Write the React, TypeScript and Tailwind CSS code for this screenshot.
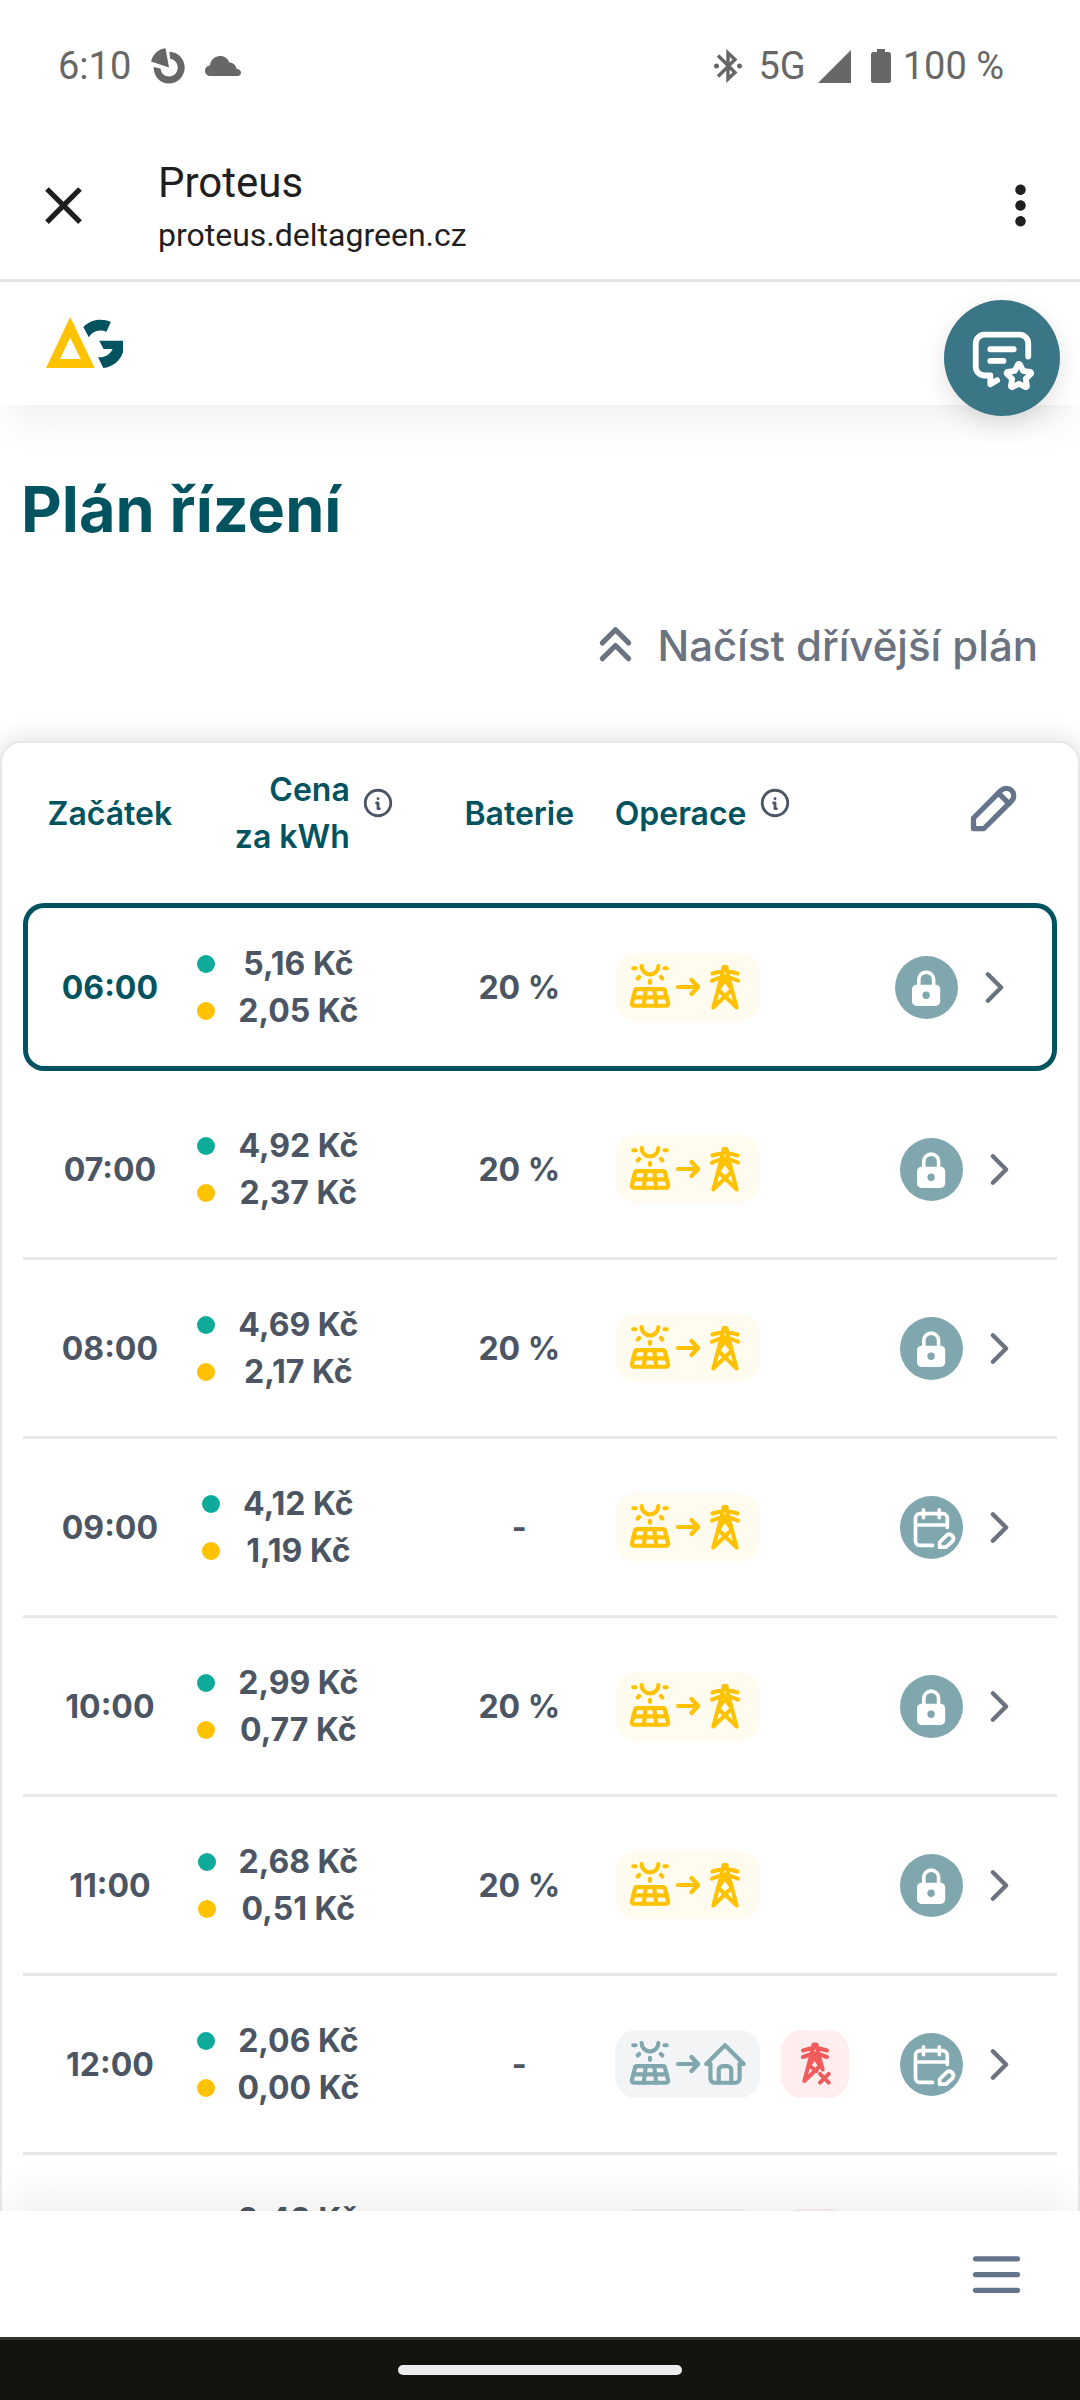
import { Fragment } from "react";
import clsx from "clsx";
import { MdClose, MdMoreVert } from "react-icons/md";
import {
  TbChevronRight,
  TbChevronsUp,
  TbHome,
  TbInfoCircle,
  TbMenu2,
  TbMessageStar,
  TbPencil,
  TbSolarPanel2,
} from "react-icons/tb";

type Slot = {
  time: string;
  buy: string;
  sell: string;
  battery: string;
  operation: "toGrid" | "toHome";
  gridBlocked?: boolean;
  source: "locked" | "planned";
  current?: boolean;
};

const slots: Slot[] = [
  { time: "06:00", buy: "5,16 Kč", sell: "2,05 Kč", battery: "20 %", operation: "toGrid", source: "locked", current: true },
  { time: "07:00", buy: "4,92 Kč", sell: "2,37 Kč", battery: "20 %", operation: "toGrid", source: "locked" },
  { time: "08:00", buy: "4,69 Kč", sell: "2,17 Kč", battery: "20 %", operation: "toGrid", source: "locked" },
  { time: "09:00", buy: "4,12 Kč", sell: "1,19 Kč", battery: "-", operation: "toGrid", source: "planned" },
  { time: "10:00", buy: "2,99 Kč", sell: "0,77 Kč", battery: "20 %", operation: "toGrid", source: "locked" },
  { time: "11:00", buy: "2,68 Kč", sell: "0,51 Kč", battery: "20 %", operation: "toGrid", source: "locked" },
  { time: "12:00", buy: "2,06 Kč", sell: "0,00 Kč", battery: "-", operation: "toHome", gridBlocked: true, source: "planned" },
  { time: "13:00", buy: "2,42 Kč", sell: "-0,01 Kč", battery: "-", operation: "toHome", gridBlocked: true, source: "planned" },
];

/* ─── Icons ──────────────────────────────────────────────────────────── */

function Logo() {
  return (
    <svg width="77" height="51" viewBox="0 0 77 51" aria-hidden="true">
      <path fill="#ffc200" fillRule="evenodd" d="M24.2 0 48.6 51H0ZM24.2 20.5 14 42h20.6Z" />
      <path fill="#00535f" d="M37.3 10C42.5 5 48 2.7 54 2.7c4.2 0 7.8.8 10.9 2.3l-4.5 9.8c-2-.8-4-1.2-6.4-1.2-4.6 0-8.4 2.3-11.2 6.7Z" />
      <path fill="#00535f" d="M53.2 23.7H77V35.2C74 44 67 49.8 57.3 51L52.1 40.3c6.5.4 12-2.6 14.5-8.3h-9Z" />
    </svg>
  );
}

function Arrow() {
  return (
    <svg width="25" height="50" viewBox="0 0 25 50" fill="none" stroke="currentColor" strokeWidth="4.2" strokeLinecap="round" strokeLinejoin="round">
      <path d="M3 25h20M16.5 18l6.7 7-6.7 7" />
    </svg>
  );
}

function Pylon() {
  return (
    <svg width="50" height="50" viewBox="0 0 50 50" fill="none" stroke="currentColor" strokeWidth="4" strokeLinecap="round" strokeLinejoin="round">
      <path d="M22 13 23.5 5h3L28 13M12.5 11.5 24 8.5h2l11.5 3M12 18.7l11-4.2h4l11 4.2" />
      <path d="M22 13 13.3 45.5 32 27.5 22 14M28 13l8.7 32.5L18 27.5 28 14" />
    </svg>
  );
}

function PylonOff() {
  return (
    <svg width="50" height="50" viewBox="0 0 50 50" fill="none" stroke="currentColor" strokeWidth="4" strokeLinecap="round" strokeLinejoin="round">
      <path d="M22 13 23.5 5.5h3L28 13M13 11.5 24 8.5h2l11 3M13 18l10-3.5h4L37 18" />
      <path d="M22 13 14.3 42 30 27 22 14M28 13l4.7 17.5M26.5 32 19 26.5 28 14" />
      <path d="m30 34.8 8.8 8.8m0-8.8L30 43.6" />
    </svg>
  );
}

function Lock() {
  return (
    <svg width="63" height="63" viewBox="0 0 63 63">
      <path d="M23.8 31v-7.5a7.4 7.4 0 0 1 14.8 0V31" fill="none" stroke="white" strokeWidth="3.6" />
      <rect x="17" y="28.7" width="28.2" height="21.2" rx="4.5" fill="white" />
      <circle cx="31.1" cy="39.2" r="3.7" fill="#7fa7ad" />
    </svg>
  );
}

function CalendarEdit() {
  return (
    <svg width="63" height="63" viewBox="0 0 63 63" fill="none" stroke="white" strokeWidth="3.7" strokeLinecap="round" strokeLinejoin="round">
      <path d="M32.5 49.4H20a4.5 4.5 0 0 1-4.5-4.5V22.2a4.5 4.5 0 0 1 4.5-4.5h22.8a4.5 4.5 0 0 1 4.5 4.5v9.2M15.5 29h31.8M23.5 13.8v7.8M39.3 13.8v7.8" />
      <path d="M39.6 51.2v-5l7-7a4.3 4.3 0 0 1 6 6l-6.6 6Z" />
    </svg>
  );
}

/* ─── Parts ──────────────────────────────────────────────────────────── */

function StatusBar() {
  return (
    <div className="flex h-[132px] shrink-0 items-center justify-between pr-[76px] pl-[58px] text-[38px] leading-[42px] text-[#676767]">
      <div className="flex items-center gap-5">
        <span>6:10</span>
        <svg width="34" height="36" viewBox="0 0 34 36" fill="currentColor" aria-hidden="true">
          <path d="M18 19.5 14.5.3C7.5 1 2 6 0 13.5Z" />
          <path d="M18.3 3.8C27 4 33.7 11 33.7 19.5S27 35.5 18 35.5 2.6 28.5 2.6 19l7 1.6C10 25.5 13.5 28.6 18 28.6c5 0 8.7-4 8.7-9 0-4.4-3-8-7.5-8.8Z" />
        </svg>
        <svg width="36" height="20" viewBox="0 0 36 20" fill="currentColor" aria-hidden="true">
          <path d="M5.5 20a5.2 5.2 0 0 1-.6-10.5C5.5 4 9.8 0 15.3 0c4.2 0 7.5 2.4 9 6.5 3.7 0 6.5 2.5 7.2 6.2 2.7.4 4.5 1.7 4.5 4 0 2-1.5 3.3-3.5 3.3Z" />
        </svg>
      </div>
      <div className="flex items-center">
        <svg width="28" height="34" viewBox="0 0 28 34" fill="none" stroke="currentColor" strokeWidth="3.4" aria-hidden="true">
          <path d="m4 6.5 17 17L14 30V4l7 6.5-17 17" />
          <circle cx="2.5" cy="17" r="2.5" fill="currentColor" stroke="none" />
          <circle cx="25.5" cy="17" r="2.5" fill="currentColor" stroke="none" />
        </svg>
        <span className="mr-3 ml-4">5G</span>
        <svg width="33" height="33" viewBox="0 0 33 33" fill="currentColor" aria-hidden="true">
          <path d="M33 0v33H0Z" />
        </svg>
        <svg className="mr-3 ml-5" width="20" height="34" viewBox="0 0 20 34" fill="currentColor" aria-hidden="true">
          <path d="M6 0h8v3h3.5A2.5 2.5 0 0 1 20 5.5v26a2.5 2.5 0 0 1-2.5 2.5h-15A2.5 2.5 0 0 1 0 31.5v-26A2.5 2.5 0 0 1 2.5 3H6Z" />
        </svg>
        <span>100 %</span>
      </div>
    </div>
  );
}

function BrowserBar() {
  return (
    <div className="flex h-[150px] shrink-0 items-center border-b-3 border-[#e5e5e5] pr-7 pl-8 text-[#1f1f1f]">
      <button type="button" aria-label="Zavřít">
        <MdClose size={63} />
      </button>
      <div className="ml-[63px] flex-1 pt-[2px]">
        <p className="text-[42px] leading-[56px]">Proteus</p>
        <p className="text-[32px] leading-[48px]">proteus.deltagreen.cz</p>
      </div>
      <button type="button" aria-label="Další možnosti">
        <MdMoreVert size={63} />
      </button>
    </div>
  );
}

function Operations({ slot }: { slot: Slot }) {
  return (
    <div className="flex gap-[21px]">
      <span
        className={clsx(
          "flex h-[68px] items-center rounded-[21px] px-[10px]",
          slot.operation === "toGrid" ? "bg-[#fffbee] text-[#ffc200]" : "bg-[#f2f4f6] text-[#7fa7ad]",
        )}
      >
        <TbSolarPanel2 size={50} />
        <Arrow />
        {slot.operation === "toGrid" ? <Pylon /> : <TbHome size={50} />}
      </span>
      {slot.gridBlocked && (
        <span className="flex h-[68px] w-[68px] items-center justify-center rounded-[21px] bg-[#ffeeee] text-[#f15b5b]">
          <PylonOff />
        </span>
      )}
    </div>
  );
}

function SlotRow({ slot }: { slot: Slot }) {
  const edge = slot.current
    ? "h-[168px] border-y-5 border-[#00535f]"
    : "h-[179px] border-b-3 border-[#e5e7eb]";

  return (
    <tr>
      <th
        scope="row"
        className={clsx(edge, "pr-[2px]", slot.current && "rounded-l-[21px] border-l-5 pr-[7px] text-[#00535f]")}
      >
        {slot.time}
      </th>
      <td className={clsx(edge, "pr-[90px]")}>
        <div className="flex justify-center gap-[23px]">
          <div className="flex flex-col">
            <span className="flex h-[47px] items-center">
              <i className="h-[18px] w-[18px] rounded-full bg-[#0eab9b]" />
            </span>
            <span className="flex h-[47px] items-center">
              <i className="h-[18px] w-[18px] rounded-full bg-[#ffc200]" />
            </span>
          </div>
          <div className="text-center whitespace-nowrap">
            <p>{slot.buy}</p>
            <p>{slot.sell}</p>
          </div>
        </div>
      </td>
      <td className={clsx(edge, "text-center")}>{slot.battery}</td>
      <td className={clsx(edge, "pl-[23px]")}>
        <Operations slot={slot} />
      </td>
      <td className={clsx(edge, "pr-[31px]", slot.current && "rounded-r-[21px] border-r-5")}>
        <div className="flex items-center justify-end gap-[10px]">
          <span className="h-[63px] w-[63px] shrink-0 rounded-full bg-[#7fa7ad]">
            {slot.source === "locked" ? <Lock /> : <CalendarEdit />}
          </span>
          <button type="button" aria-label={`Detail ${slot.time}`} className="text-[#6b7280]">
            <TbChevronRight size={53} />
          </button>
        </div>
      </td>
    </tr>
  );
}

function PlanTable() {
  return (
    <table className="w-full table-fixed border-separate border-spacing-0 text-[32px] leading-[47px] font-bold text-[#4b5563]">
      <thead className="text-[#00535f]">
        <tr>
          <th className="h-[160px] w-[17%] pr-[2px] pb-5 font-semibold">Začátek</th>
          <th className="w-[24%] pb-5 pl-9 font-semibold">
            <div className="flex items-center gap-[11px]">
              <span className="text-right">
                Cena
                <br />
                za kWh
              </span>
              <button type="button" aria-label="Informace o ceně" className="pb-5 text-[#4b5563]">
                <TbInfoCircle size={34} />
              </button>
            </div>
          </th>
          <th className="w-[14%] pb-5 font-semibold">Baterie</th>
          <th className="pb-5 pl-[23px] font-semibold">
            <div className="flex items-center gap-[11px]">
              Operace
              <button type="button" aria-label="Informace o operacích" className="pb-5 text-[#4b5563]">
                <TbInfoCircle size={34} />
              </button>
            </div>
          </th>
          <th className="w-[18%] pr-[31px] pb-8 text-right">
            <button type="button" aria-label="Upravit plán" className="align-middle text-[#64748b]">
              <TbPencil size={63} />
            </button>
          </th>
        </tr>
      </thead>
      <tbody>
        {slots.map((slot) => (
          <Fragment key={slot.time}>
            <SlotRow slot={slot} />
            {slot.current && (
              <tr aria-hidden="true">
                <td colSpan={5} className="h-[10px]" />
              </tr>
            )}
          </Fragment>
        ))}
      </tbody>
    </table>
  );
}

/* ─── Page ───────────────────────────────────────────────────────────── */

export default function App() {
  return (
    <div className="flex h-screen flex-col overflow-hidden bg-white font-['Roboto',sans-serif]">
      <StatusBar />
      <BrowserBar />

      <header className="relative z-10 flex h-[123px] shrink-0 items-center bg-white pb-[2px] pl-[46px] shadow-[0_26px_39px_-8px_rgba(0,0,0,0.06)]">
        <a href="#" aria-label="Delta Green">
          <Logo />
        </a>
        <button
          type="button"
          aria-label="Zpětná vazba"
          className="absolute top-[18px] right-5 flex h-[116px] w-[116px] items-center justify-center rounded-full bg-[#3b7686] text-white shadow-[0_8px_24px_rgba(0,0,0,0.12)]"
        >
          <TbMessageStar size={70} />
        </button>
      </header>

      <main className="flex-1 overflow-y-auto font-['Inter',sans-serif] [scrollbar-width:none]">
        <h1 className="px-[21px] pt-[62px] text-[63px] leading-[84px] font-bold text-[#00535f]">Plán řízení</h1>
        <div className="flex justify-end pt-[63px] pr-[42px] pb-16">
          <button type="button" className="flex items-center gap-[10px] text-[42px] leading-[63px] font-medium text-[#6b7280]">
            <TbChevronsUp size={63} />
            Načíst dřívější plán
          </button>
        </div>
        <section className="rounded-[21px] border-2 border-[#e5e7eb] bg-white px-[21px] shadow-[0_0_28px_rgba(0,0,0,0.14)]">
          <PlanTable />
        </section>
      </main>

      <nav className="relative z-10 flex h-[126px] shrink-0 items-center justify-end bg-white pr-[52px] shadow-[0_-26px_39px_-8px_rgba(0,0,0,0.06)]">
        <button type="button" aria-label="Menu" className="text-[#64748b]">
          <TbMenu2 size={63} />
        </button>
      </nav>

      <div className="flex h-[63px] shrink-0 items-center justify-center border-t-3 border-[#2f352b] bg-[#12140e]">
        <span className="h-[10px] w-[284px] rounded-full bg-[#ececec]" />
      </div>
    </div>
  );
}
